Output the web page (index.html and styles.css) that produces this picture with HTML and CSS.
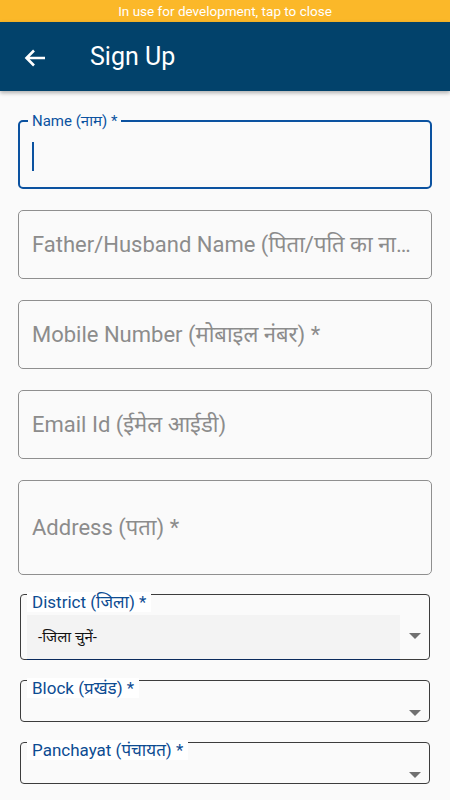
FILE: index.html
```html
<!DOCTYPE html>
<html lang="hi">
<head>
    <meta charset="UTF-8">
    <meta name="viewport" content="width=device-width, initial-scale=1.0">
    <title>Sign Up</title>
    <link rel="stylesheet" href="styles.css">
</head>
<body>
    <div class="dev-banner">In use for development, tap to close</div>
    <header class="app-bar">
        <svg class="app-bar-back" width="22" height="18" viewBox="0 0 22 18">
            <path d="M21 9H3M10 1.5L2.5 9l7.5 7.5" fill="none" stroke="#fff" stroke-width="2.6"/>
        </svg>
        <h1 class="app-bar-title">Sign Up</h1>
    </header>

    <form class="signup-form">
        <fieldset class="field-active">
            <legend>Name (नाम) *</legend>
            <div class="field-active-body">
                <span class="caret"></span>
            </div>
        </fieldset>

        <input type="text" class="text-field" placeholder="Father/Husband Name (पिता/पति का नाम)">
        <input type="text" class="text-field" placeholder="Mobile Number (मोबाइल नंबर) *">
        <input type="text" class="text-field" placeholder="Email Id (ईमेल आईडी)">
        <input type="text" class="text-field text-field-tall" placeholder="Address (पता) *">

        <div class="select-field select-field-filled">
            <span class="select-label">District (जिला) *</span>
            <div class="select-value">-जिला चुनें-</div>
            <span class="select-arrow"></span>
        </div>

        <div class="select-field">
            <span class="select-label">Block (प्रखंड) *</span>
            <div class="select-value"></div>
            <span class="select-arrow"></span>
        </div>

        <div class="select-field">
            <span class="select-label">Panchayat (पंचायत) *</span>
            <div class="select-value"></div>
            <span class="select-arrow"></span>
        </div>
    </form>
</body>
</html>
```

FILE: styles.css
```css
* {
    padding: 0;
    margin: 0;
    box-sizing: border-box;
}
body {
    background: #fafafa;
    font-family: Roboto, "Noto Sans", "DejaVu Sans", sans-serif;
    width: 450px;
    height: 800px;
    overflow: hidden;
}
.dev-banner {
    height: 22px;
    line-height: 23px;
    background: #fbb829;
    color: #fff;
    font-size: 13.5px;
    text-align: center;
}
.app-bar {
    height: 69px;
    background: #02426b;
    display: flex;
    align-items: center;
    padding-left: 24px;
    box-shadow: 0 2px 4px rgba(0, 0, 0, 0.3);
    position: relative;
}
.app-bar-back {
    display: block;
    margin-top: 2px;
}
.app-bar-title {
    margin-left: 44px;
    color: #fff;
    font-size: 25px;
    font-weight: 400;
}
.signup-form {
    padding: 22px 18px 0;
    display: flex;
    flex-direction: column;
}
.field-active {
    border: 2px solid #0b52a0;
    border-radius: 5px;
    padding: 0 12px;
    height: 76px;
}
.field-active legend {
    padding: 0 4px;
    margin-left: -4px;
    font-size: 15px;
    line-height: 16px;
    color: #0b52a0;
}
.field-active-body {
    padding-top: 13px;
}
.caret {
    display: block;
    width: 2px;
    height: 29px;
    background: #0b52a0;
}
.text-field {
    display: block;
    width: 100%;
    height: 69px;
    margin-top: 21px;
    border: 1px solid #8f8f8f;
    border-radius: 5px;
    background: transparent;
    padding: 0 18px 0 13px;
    font-family: inherit;
    font-size: 22px;
    color: #222;
    text-overflow: ellipsis;
    outline: none;
}
.text-field::placeholder {
    color: #8c8c8c;
}
.text-field-tall {
    height: 95px;
}
.select-field {
    position: relative;
    display: flex;
    align-items: stretch;
    height: 42px;
    margin: 20px 2px 0;
    border: 1px solid #3c3c3c;
    border-radius: 4px;
    padding: 20px 0 0 6px;
}
.select-field-filled {
    height: 66px;
    margin-top: 19px;
}
.select-label {
    position: absolute;
    top: -3px;
    left: 6px;
    padding: 0 5px;
    background: #fff;
    color: #0d4c92;
    font-size: 17px;
    line-height: 20px;
}
.select-value {
    flex: 1;
    font-size: 15px;
    color: #111;
    display: flex;
    align-items: center;
    padding-left: 11px;
}
.select-field-filled .select-value {
    background: #f3f3f3;
    border-bottom: 1px solid #0a2a5c;
    margin-bottom: -1px;
    padding-bottom: 2px;
}
.select-arrow {
    width: 29px;
    display: flex;
    align-items: center;
    padding-left: 9px;
}
.select-arrow::after {
    content: "";
    border-left: 6px solid transparent;
    border-right: 6px solid transparent;
    border-top: 6px solid #707070;
    margin-top: 4px;
}
.select-field-filled .select-arrow::after {
    margin-top: -2px;
}
```
